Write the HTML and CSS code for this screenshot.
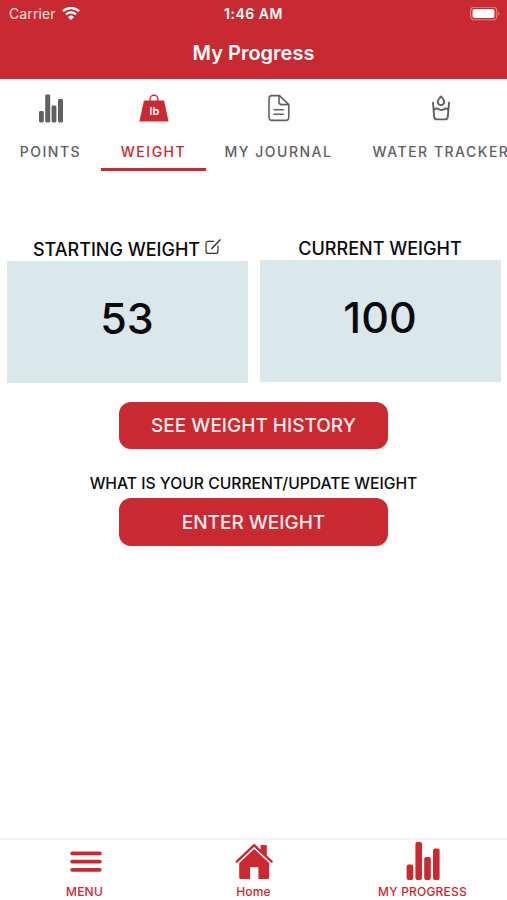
FILE: index.html
```html
<!DOCTYPE html>
<html lang="en">
<head>
  <meta charset="utf-8">
  <title>My Progress</title>
  <link rel="stylesheet" href="styles.css">
</head>
<body>
  <div class="app">
    <header class="header">
      <div class="status-bar">
        <div class="carrier">
          <span>Carrier</span>
          <svg class="wifi-icon" viewBox="0 0 18 14" width="18" height="14">
            <path d="M1 4.2 A11.5 11.5 0 0 1 17 4.2" fill="none" stroke="#fff" stroke-width="2.4"/>
            <path d="M3.9 7.5 A7.3 7.3 0 0 1 14.1 7.5" fill="none" stroke="#fff" stroke-width="2.2"/>
            <path d="M6 10 A4.3 4.3 0 0 1 12 10 L9 13 Z" fill="#fff"/>
          </svg>
        </div>
        <span class="time">1:46 AM</span>
        <div class="battery">
          <svg viewBox="0 0 31 14" width="31" height="14">
            <rect x="0.6" y="0.2" width="26.2" height="12.6" rx="3.6" fill="none" stroke="#e0868b" stroke-width="1.1"/>
            <rect x="2.5" y="2" width="22" height="9" rx="2" fill="#fff"/>
            <path d="M28.2 4.2 Q30.4 6.5 28.2 8.8 Z" fill="#e0868b"/>
          </svg>
        </div>
      </div>
      <h1 class="title">My Progress</h1>
    </header>

    <nav class="tabs">
      <div class="tab points">
        <svg viewBox="0 0 26 30" width="26" height="30" fill="#616163">
          <rect x="1" y="17" width="4.8" height="11.4" rx="1.4"/>
          <rect x="7.2" y="0.6" width="5" height="27.8" rx="1.4"/>
          <rect x="13.6" y="11.4" width="4.8" height="17" rx="1.4"/>
          <rect x="20" y="5" width="5" height="23.4" rx="1.4"/>
        </svg>
        <span class="tab-label">POINTS</span>
      </div>
      <div class="tab weight active">
        <svg viewBox="0 0 30 30" width="30" height="30">
          <circle cx="15" cy="5.2" r="4" fill="none" stroke="#ca2931" stroke-width="1.4"/>
          <path d="M5.8 6.4 H24.2 Q25 6.4 25.2 7.2 L29.6 27.4 H0.4 L4.8 7.2 Q5 6.4 5.8 6.4 Z" fill="#ca2931"/>
          <text class="lb" x="15.4" y="21" text-anchor="middle">lb</text>
        </svg>
        <span class="tab-label">WEIGHT</span>
      </div>
      <div class="tab journal">
        <svg viewBox="0 0 22 30" width="22" height="30" fill="none" stroke="#616163" stroke-width="1.6" stroke-linejoin="round">
          <path d="M11.5 1.6 H4 Q1 1.6 1 4.6 V23 Q1 26.4 4.2 26.4 H17.6 Q20.8 26.4 20.8 23 V10.6 Z"/>
          <path d="M11 1.8 V8 Q11 10.6 13.6 10.6 H20.6"/>
          <path d="M5.6 15.8 H15.8 M5.6 20.2 H15.8"/>
        </svg>
        <span class="tab-label">MY JOURNAL</span>
      </div>
      <div class="tab water">
        <svg viewBox="0 0 20 30" width="20" height="30" fill="none" stroke="#616163" stroke-width="1.9" stroke-linecap="round" stroke-linejoin="round">
          <path d="M10 2.4 Q6.7 6.2 6.7 7.8 A3.3 3.3 0 0 0 13.3 7.8 Q13.3 6.2 10 2.4 Z"/>
          <path d="M2 8.6 L3.2 22.8 Q3.5 25.4 5.8 25.4 H14.2 Q16.5 25.4 16.8 22.8 L18 8.6"/>
          <path d="M3 15.6 Q5.4 13.6 8 15.2 Q10.4 16.8 12.6 15.2 Q15 13.8 17 15.4"/>
        </svg>
        <span class="tab-label">WATER TRACKER</span>
      </div>
    </nav>

    <main class="content">
      <div class="weights">
        <section class="weight-col starting">
          <h2 class="weight-title">
            <span>STARTING WEIGHT</span>
            <svg viewBox="0 0 16 16" width="16" height="16" fill="none" stroke="#333" stroke-width="1.2" stroke-linecap="round">
              <path d="M8.6 2.3 H3.2 Q1 2.3 1 4.5 V12.2 Q1 14.4 3.2 14.4 H10.8 Q13 14.4 13 12.2 V7"/>
              <path d="M6.8 9.4 L15 0.9" stroke-width="1.5"/>
            </svg>
          </h2>
          <div class="weight-box">53</div>
        </section>
        <section class="weight-col current">
          <h2 class="weight-title"><span>CURRENT WEIGHT</span></h2>
          <div class="weight-box">100</div>
        </section>
      </div>
      <button class="red-button history">SEE WEIGHT HISTORY</button>
      <p class="question">WHAT IS YOUR CURRENT/UPDATE WEIGHT</p>
      <button class="red-button enter">ENTER WEIGHT</button>
    </main>

    <footer class="bottom-nav">
      <div class="nav-item menu">
        <svg viewBox="0 0 38 38" width="38" height="38" stroke="#ca2931" stroke-width="3.8" stroke-linecap="round">
          <path d="M6.2 10.4 H33.8 M6.2 18.6 H33.8 M6.2 26.8 H33.8"/>
        </svg>
        <span>MENU</span>
      </div>
      <div class="nav-item home">
        <svg viewBox="0 0 38 38" width="38" height="38" fill="#ca2931">
          <path d="M25.6 3.2 Q25.6 2 26.8 2 H30.6 Q31.8 2 31.8 3.2 V13.4 L25.6 7.6 Z"/>
          <path d="M1.8 18.6 L19.2 2.2 L36.6 18.6" fill="none" stroke="#ca2931" stroke-width="2.4" stroke-linecap="round" stroke-linejoin="round"/>
          <path d="M19.2 6 L34.2 20 V34.4 Q34.2 36 32.6 36 H23.4 V24.2 H15 V36 H5.8 Q4.2 36 4.2 34.4 V20 Z"/>
        </svg>
        <span>Home</span>
      </div>
      <div class="nav-item progress">
        <svg viewBox="0 0 36 40" width="36" height="40" fill="#ca2931">
          <rect x="1.6" y="23.4" width="6.6" height="15.6" rx="2"/>
          <rect x="10.4" y="1" width="6.6" height="38" rx="2"/>
          <rect x="19.2" y="16" width="6.6" height="23" rx="2"/>
          <rect x="28" y="7.4" width="6.6" height="31.6" rx="2"/>
        </svg>
        <span>MY PROGRESS</span>
      </div>
    </footer>
  </div>
</body>
</html>
```
FILE: styles.css
```css
* {
  box-sizing: border-box;
}

body {
  margin: 0;
  background-color: #fefefe;
  font-family: Inter, sans-serif;
  color: #0b0b0d;
}

h1, h2, p {
  margin: 0;
}

svg {
  display: block;
  flex-shrink: 0;
}

.app {
  display: flex;
  flex-direction: column;
  width: 507px;
  height: 900px;
  overflow: hidden;
}

.header {
  height: 79px;
  background-color: #c92931;
  color: white;
}

.status-bar {
  display: grid;
  grid-template-columns: 1fr auto 1fr;
  align-items: center;
  height: 27px;
  padding: 0 6px 0 9px;
}

.carrier {
  display: flex;
  align-items: center;
  gap: 6px;
  font-size: 14px;
  letter-spacing: 0.1px;
  color: #fbe4e4;
}

.time {
  margin-right: 3px;
  font-size: 14px;
  font-weight: 600;
  letter-spacing: 0.5px;
}

.battery {
  display: flex;
  justify-content: flex-end;
}

.title {
  padding-top: 12px;
  font-size: 20px;
  font-weight: 600;
  line-height: 28px;
  text-align: center;
}

.tabs {
  display: flex;
  height: 92px;
  overflow: hidden;
}

.tab {
  display: flex;
  flex-direction: column;
  flex-shrink: 0;
  align-items: center;
  gap: 17px;
  padding-top: 15px;
  border-bottom: 3px solid transparent;
  color: #616163;
}

.tab.points {
  width: 101px;
}

.tab.weight {
  width: 105px;
}

.tab.journal {
  width: 145px;
}

.tab.water {
  width: 180px;
}

.tab.active {
  color: #ca2931;
  border-bottom-color: #ca2931;
}

.tab-label {
  font-size: 14px;
  font-weight: 500;
  line-height: 21px;
  letter-spacing: 1.5px;
  white-space: nowrap;
}

.lb {
  font-size: 11px;
  font-weight: 600;
  fill: white;
}

.content {
  display: flex;
  flex: 1;
  flex-direction: column;
  align-items: center;
}

.weights {
  display: flex;
  gap: 12px;
  padding-top: 66px;
}

.weight-col {
  width: 241px;
}

.weight-col.starting {
  padding-top: 1px;
}

.weight-title {
  display: flex;
  justify-content: center;
  gap: 5px;
  height: 23px;
  font-size: 18px;
  font-weight: 450;
  line-height: 24px;
  white-space: nowrap;
}

.weight-title svg {
  margin-top: 1px;
}

.weight-box {
  height: 122px;
  background-color: #dae7eb;
  font-size: 43px;
  font-weight: 450;
  line-height: 114px;
  text-align: center;
}

.red-button {
  width: 269px;
  height: 47px;
  padding: 0;
  border: none;
  border-radius: 12px;
  background-color: #c92931;
  color: #fdecec;
  font-family: inherit;
  font-size: 19px;
  font-weight: 450;
  cursor: pointer;
}

.history {
  margin-top: 19px;
}

.question {
  margin-top: 25px;
  font-size: 15.7px;
  font-weight: 450;
  line-height: 20px;
}

.enter {
  height: 48px;
  margin-top: 4px;
}

.bottom-nav {
  display: grid;
  grid-template-columns: repeat(3, 1fr);
  height: 62px;
  border-top: 2px solid #f3f3f3;
}

.nav-item {
  display: flex;
  flex-direction: column;
  align-items: center;
  justify-content: flex-end;
  gap: 3px;
  padding-bottom: 1px;
  color: #ca2931;
  font-size: 12px;
  font-weight: 500;
  letter-spacing: 0.2px;
  line-height: 15px;
}
```
